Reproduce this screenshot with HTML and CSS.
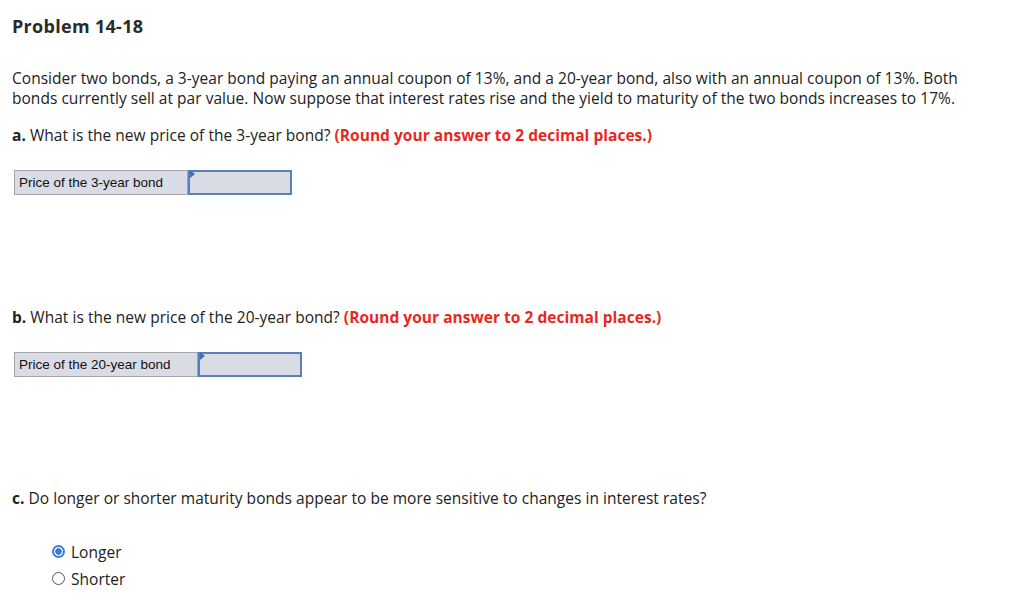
FILE: index.html
```html
<!DOCTYPE html>
<html>
<head>
<meta charset="utf-8">
<link rel="stylesheet" href="styles.css">
</head>
<body>
<div class="page">
  <h1 class="title">Problem 14-18</h1>
  <p class="intro">Consider two bonds, a 3-year bond paying an annual coupon of 13%, and a 20-year bond, also with an annual coupon of 13%. Both bonds currently sell at par value. Now suppose that interest rates rise and the yield to maturity of the two bonds increases to 17%.</p>
  <p class="q"><b>a.</b> What is the new price of the 3-year bond? <span class="hint">(Round your answer to 2 decimal places.)</span></p>
  <div class="answer a1">
    <div class="label">Price of the 3-year bond</div>
    <div class="input"><span class="flag"></span></div>
  </div>
  <p class="q qb"><b>b.</b> What is the new price of the 20-year bond? <span class="hint">(Round your answer to 2 decimal places.)</span></p>
  <div class="answer a2">
    <div class="label">Price of the 20-year bond</div>
    <div class="input"><span class="flag"></span></div>
  </div>
  <p class="q qc"><b>c.</b> Do longer or shorter maturity bonds appear to be more sensitive to changes in interest rates?</p>
  <div class="choices">
    <div class="choice"><span class="radio checked"></span>Longer</div>
    <div class="choice"><span class="radio"></span>Shorter</div>
  </div>
</div>
</body>
</html>
```
FILE: styles.css
```css
html, body { margin: 0; padding: 0; background: #fff; }
.page {
  padding: 0 12px;
  max-width: 985px;
  font-family: "Open Sans", "Lato", sans-serif;
  color: #222;
  font-size: 15.5px;
  letter-spacing: 0.03px;
}
.title {
  margin: 0;
  padding-top: 15px;
  font-size: 18px;
  line-height: 22px;
  font-weight: 700;
  letter-spacing: 0.3px;
  color: #2a2a2a;
}
.intro {
  margin: 31px 0 0;
  line-height: 20px;
}
.q {
  margin: 17px 0 0;
  line-height: 20px;
}
.q b { font-weight: 700; }
.hint { color: #e8281f; font-weight: 700; }
.answer {
  display: flex;
  margin: 25px 0 0 2px;
  border: 1px solid #a5a5a5;
  background: #d9dce5;
  height: 23px;
  font-family: "Liberation Sans", Arial, sans-serif;
  font-size: 13.5px;
  letter-spacing: 0;
  color: #111;
}
.a1 { width: 276px; }
.a2 { width: 286px; }
.label {
  padding-left: 4px;
  line-height: 23px;
  border-right: 1px solid #a5a5a5;
}
.a1 .label { width: 168px; }
.a2 .label { width: 178px; }
.input {
  flex: 1;
  position: relative;
  border: 2px solid #5a7fb8;
  margin: -1px -1px -1px 0;
}
.flag {
  position: absolute;
  left: 0;
  top: -2px;
  width: 0; height: 0;
  border-top: 4px solid transparent;
  border-bottom: 4px solid transparent;
  border-left: 5px solid #3e6fc1;
}
.qb { margin-top: 112px; }
.qc { margin-top: 111px; }
.choices { margin: 30px 0 0 40px; }
.choice {
  display: flex;
  align-items: center;
  height: 27px;
}
.radio {
  width: 13px; height: 13px;
  border: 1px solid #555;
  border-radius: 50%;
  margin-right: 6px;
  box-sizing: border-box;
}
.radio.checked {
  border: 2px solid #3b7be0;
  background: radial-gradient(circle, #3b7be0 0 3px, #fff 3.5px);
}
```
